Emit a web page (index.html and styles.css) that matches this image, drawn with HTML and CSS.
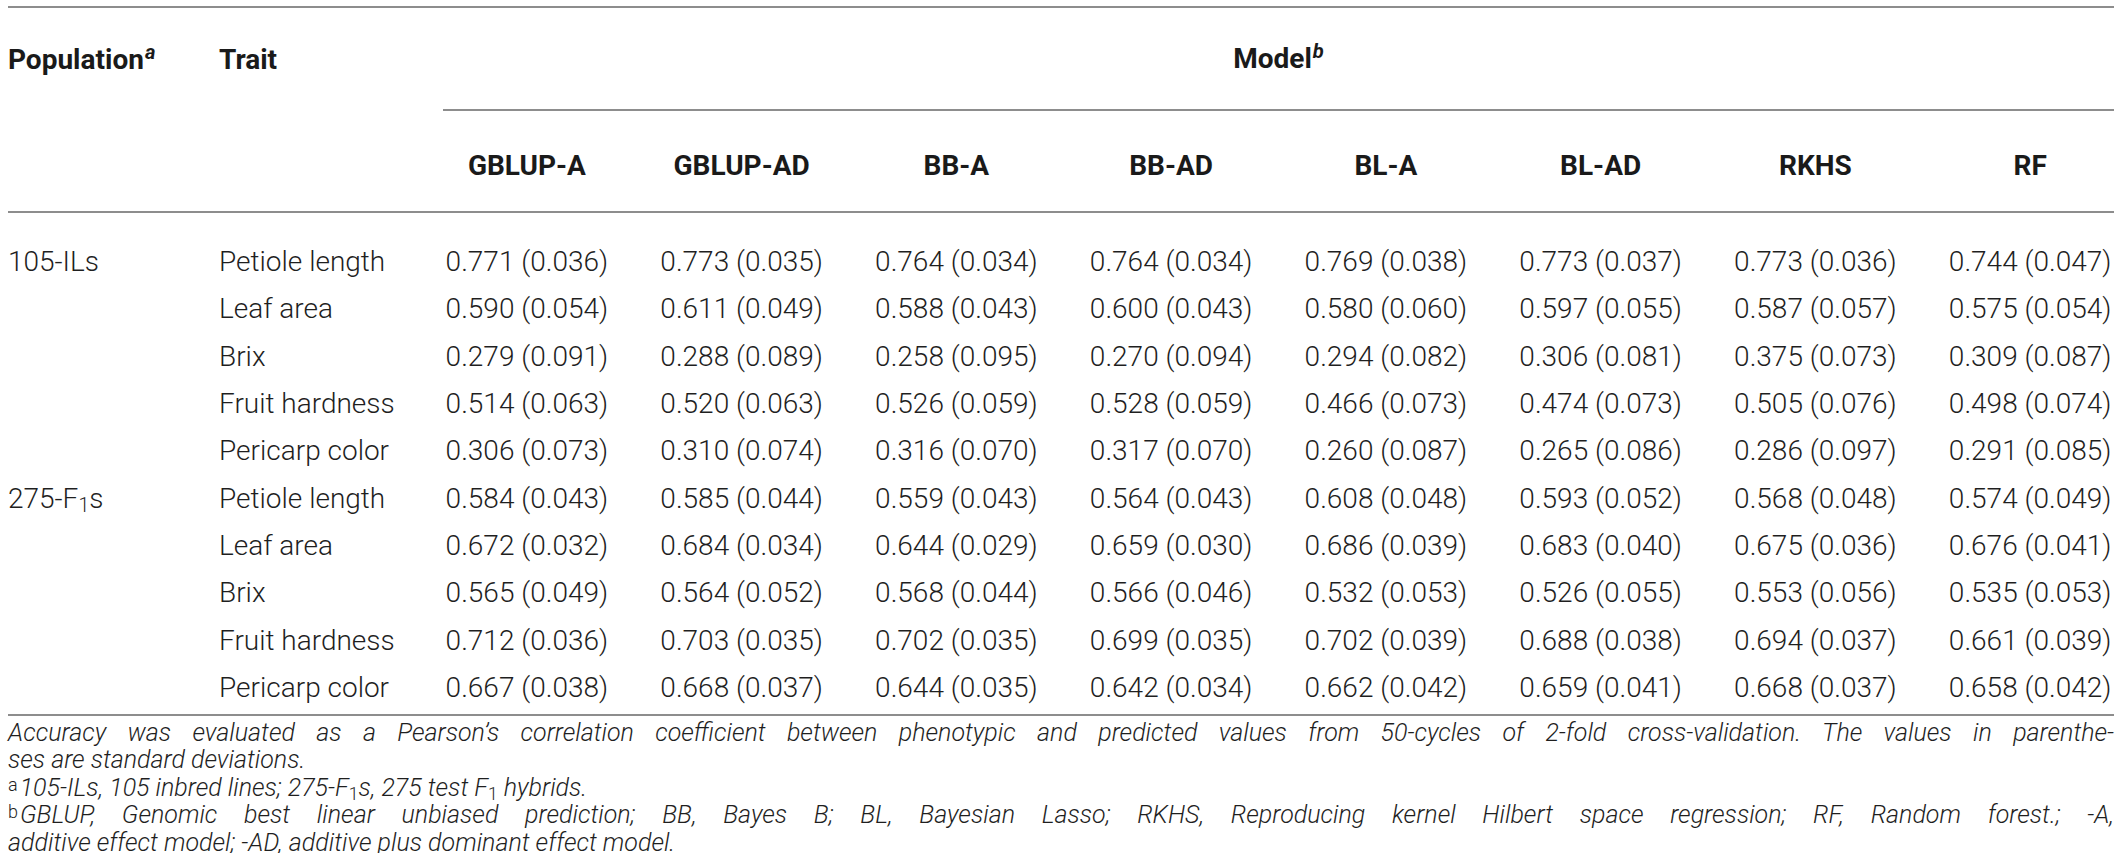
FILE: index.html
```html
<!DOCTYPE html>
<html lang="en">
<head>
<meta charset="utf-8">
<title>Prediction accuracy</title>
<link rel="stylesheet" href="styles.css">
</head>
<body>
<div class="page">
  <table class="tbl">
    <colgroup>
      <col class="c-pop"><col class="c-trait">
      <col class="c-num"><col class="c-num"><col class="c-num"><col class="c-num">
      <col class="c-num"><col class="c-num"><col class="c-num"><col class="c-num">
    </colgroup>
    <thead>
      <tr class="hr1">
        <th class="lft">Population<sup>a</sup></th>
        <th class="lft">Trait</th>
        <th class="model" colspan="8"><div class="model-lbl">Model<sup>b</sup></div></th>
      </tr>
      <tr class="hr2">
        <th></th>
        <th></th>
        <th class="num">GBLUP-A</th>
        <th class="num">GBLUP-AD</th>
        <th class="num">BB-A</th>
        <th class="num">BB-AD</th>
        <th class="num">BL-A</th>
        <th class="num">BL-AD</th>
        <th class="num">RKHS</th>
        <th class="num">RF</th>
      </tr>
    </thead>
    <tbody>
      <tr class="first"><td>105-ILs</td><td>Petiole length</td><td class="num">0.771 (0.036)</td><td class="num">0.773 (0.035)</td><td class="num">0.764 (0.034)</td><td class="num">0.764 (0.034)</td><td class="num">0.769 (0.038)</td><td class="num">0.773 (0.037)</td><td class="num">0.773 (0.036)</td><td class="num">0.744 (0.047)</td></tr>
      <tr><td></td><td>Leaf area</td><td class="num">0.590 (0.054)</td><td class="num">0.611 (0.049)</td><td class="num">0.588 (0.043)</td><td class="num">0.600 (0.043)</td><td class="num">0.580 (0.060)</td><td class="num">0.597 (0.055)</td><td class="num">0.587 (0.057)</td><td class="num">0.575 (0.054)</td></tr>
      <tr><td></td><td>Brix</td><td class="num">0.279 (0.091)</td><td class="num">0.288 (0.089)</td><td class="num">0.258 (0.095)</td><td class="num">0.270 (0.094)</td><td class="num">0.294 (0.082)</td><td class="num">0.306 (0.081)</td><td class="num">0.375 (0.073)</td><td class="num">0.309 (0.087)</td></tr>
      <tr><td></td><td>Fruit hardness</td><td class="num">0.514 (0.063)</td><td class="num">0.520 (0.063)</td><td class="num">0.526 (0.059)</td><td class="num">0.528 (0.059)</td><td class="num">0.466 (0.073)</td><td class="num">0.474 (0.073)</td><td class="num">0.505 (0.076)</td><td class="num">0.498 (0.074)</td></tr>
      <tr><td></td><td>Pericarp color</td><td class="num">0.306 (0.073)</td><td class="num">0.310 (0.074)</td><td class="num">0.316 (0.070)</td><td class="num">0.317 (0.070)</td><td class="num">0.260 (0.087)</td><td class="num">0.265 (0.086)</td><td class="num">0.286 (0.097)</td><td class="num">0.291 (0.085)</td></tr>
      <tr><td>275-F<sub>1</sub>s</td><td>Petiole length</td><td class="num">0.584 (0.043)</td><td class="num">0.585 (0.044)</td><td class="num">0.559 (0.043)</td><td class="num">0.564 (0.043)</td><td class="num">0.608 (0.048)</td><td class="num">0.593 (0.052)</td><td class="num">0.568 (0.048)</td><td class="num">0.574 (0.049)</td></tr>
      <tr><td></td><td>Leaf area</td><td class="num">0.672 (0.032)</td><td class="num">0.684 (0.034)</td><td class="num">0.644 (0.029)</td><td class="num">0.659 (0.030)</td><td class="num">0.686 (0.039)</td><td class="num">0.683 (0.040)</td><td class="num">0.675 (0.036)</td><td class="num">0.676 (0.041)</td></tr>
      <tr><td></td><td>Brix</td><td class="num">0.565 (0.049)</td><td class="num">0.564 (0.052)</td><td class="num">0.568 (0.044)</td><td class="num">0.566 (0.046)</td><td class="num">0.532 (0.053)</td><td class="num">0.526 (0.055)</td><td class="num">0.553 (0.056)</td><td class="num">0.535 (0.053)</td></tr>
      <tr><td></td><td>Fruit hardness</td><td class="num">0.712 (0.036)</td><td class="num">0.703 (0.035)</td><td class="num">0.702 (0.035)</td><td class="num">0.699 (0.035)</td><td class="num">0.702 (0.039)</td><td class="num">0.688 (0.038)</td><td class="num">0.694 (0.037)</td><td class="num">0.661 (0.039)</td></tr>
      <tr class="last"><td></td><td>Pericarp color</td><td class="num">0.667 (0.038)</td><td class="num">0.668 (0.037)</td><td class="num">0.644 (0.035)</td><td class="num">0.642 (0.034)</td><td class="num">0.662 (0.042)</td><td class="num">0.659 (0.041)</td><td class="num">0.668 (0.037)</td><td class="num">0.658 (0.042)</td></tr>
    </tbody>
  </table>
  <div class="notes">
    <p class="fn just">Accuracy was evaluated as a Pearson’s correlation coefficient between phenotypic and predicted values from 50-cycles of 2-fold cross-validation. The values in parenthe-</p>
    <p class="fn">ses are standard deviations.</p>
    <p class="fn"><span class="mark">a</span>105-ILs, 105 inbred lines; 275-F<sub>1</sub>s, 275 test F<sub>1</sub> hybrids.</p>
    <p class="fn just"><span class="mark">b</span>GBLUP, Genomic best linear unbiased prediction; BB, Bayes B; BL, Bayesian Lasso; RKHS, Reproducing kernel Hilbert space regression; RF, Random forest.; -A,</p>
    <p class="fn">additive effect model; -AD, additive plus dominant effect model.</p>
  </div>
</div>
</body>
</html>
```

FILE: styles.css
```css
html, body {
  margin: 0;
  padding: 0;
  background: #ffffff;
}

body {
  font-family: Roboto, "Liberation Sans", Arial, sans-serif;
  font-weight: 300;
  color: #1f1f1f;
}

.page {
  padding: 6px 6px 0 8px;
  width: 2106px;
}

.tbl {
  width: 2106px;
  table-layout: fixed;
  border-collapse: collapse;
  font-size: 28px;
  border-top: 2px solid #8d8d8d;
}

.c-pop { width: 211px; }
.c-trait { width: 177px; }
.c-num { width: 214.75px; }

.tbl th {
  font-weight: 700;
  padding: 0;
  color: #1a1a1a;
}

.tbl th.lft {
  text-align: left;
  vertical-align: middle;
}

.tbl th.num,
.tbl td.num {
  padding-left: 47px;
  text-align: center;
}

.tbl sup {
  font-style: italic;
  font-size: 0.72em;
  line-height: 0;
  vertical-align: 0.5em;
  margin-left: 1px;
}

.tbl sub,
.fn sub {
  font-size: 0.7em;
  line-height: 0;
  vertical-align: -0.2em;
  font-style: normal;
}

.hr1 th {
  height: 101px;
}

.tbl th.model {
  padding-left: 47px;
  vertical-align: bottom;
}

.model-lbl {
  height: 101px;
  line-height: 101px;
  text-align: center;
  border-bottom: 2px solid #8d8d8d;
}

.hr2 {
  border-bottom: 2px solid #8d8d8d;
}

.hr2 th {
  height: 92px;
  padding-top: 8px;
  vertical-align: middle;
}

.tbl td {
  height: 47.3px;
  padding: 0;
  vertical-align: middle;
  white-space: nowrap;
}

.tbl tr.first td {
  padding-top: 25px;
}

.tbl tr.last td {
  padding-bottom: 3px;
}

.tbl tbody {
  border-bottom: 2px solid #8d8d8d;
}

.notes {
  padding-top: 3px;
  width: 2106px;
}

.fn {
  margin: 0;
  font-size: 25px;
  line-height: 27.5px;
  font-style: italic;
  white-space: nowrap;
}

.fn.just {
  text-align: justify;
  text-align-last: justify;
}

.fn .mark {
  font-style: normal;
  font-size: 0.72em;
  vertical-align: 0.3em;
  line-height: 0;
  margin-right: 2px;
}
```
